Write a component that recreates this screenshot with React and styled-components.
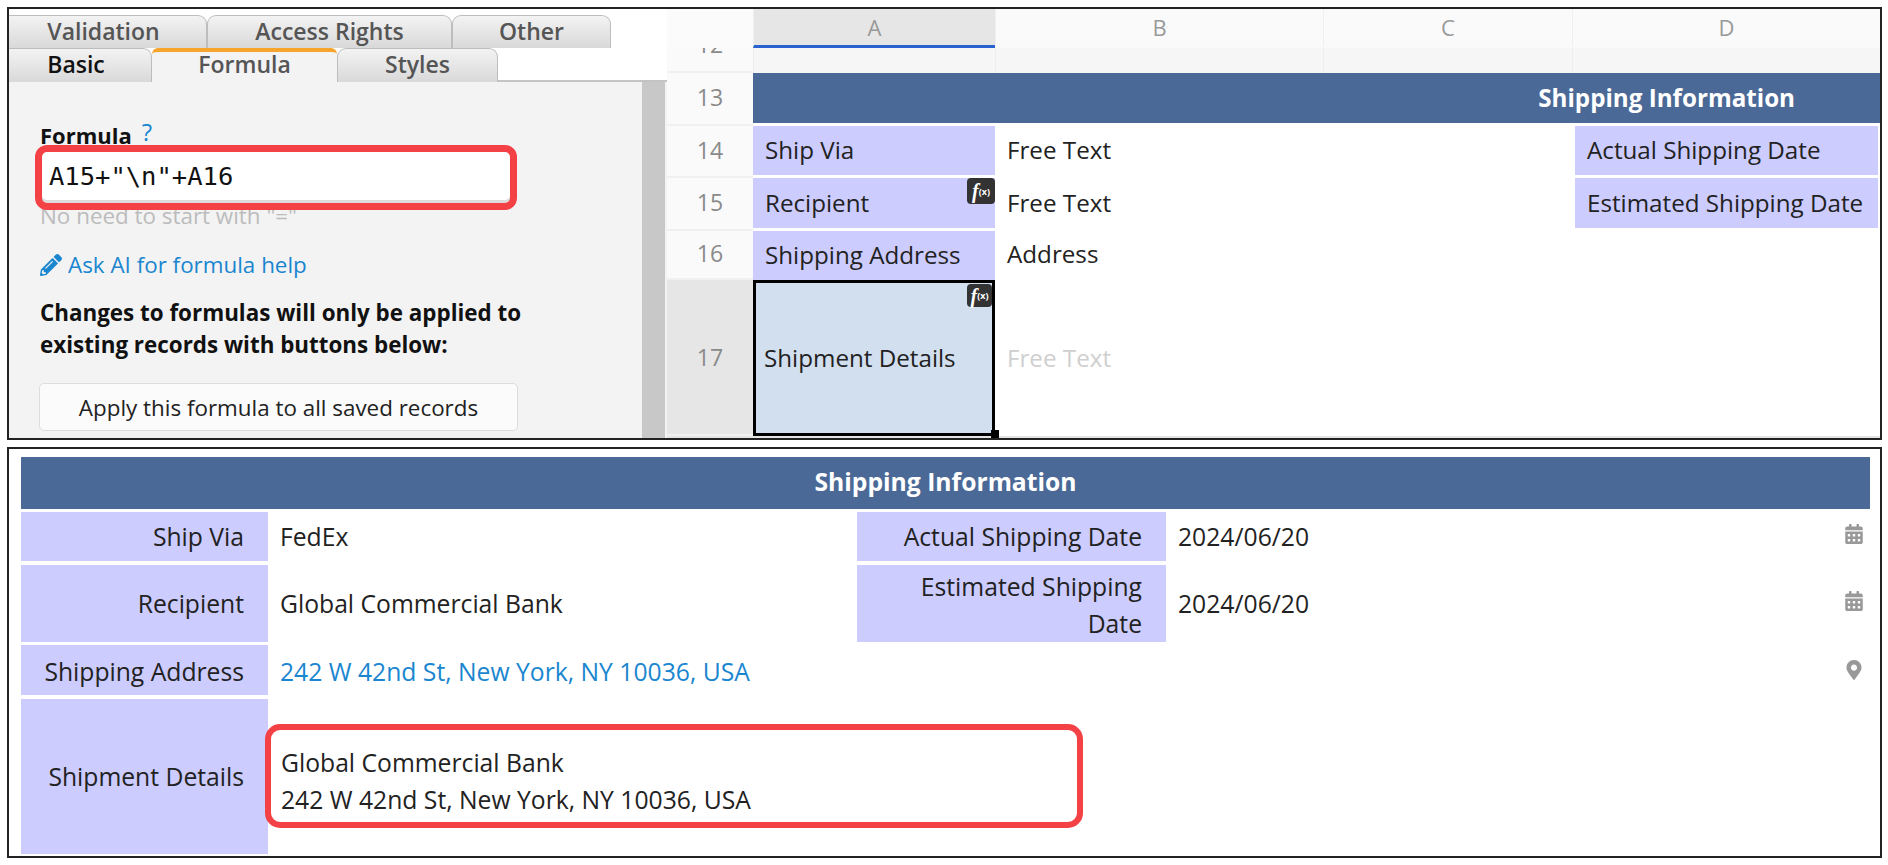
import styled, { createGlobalStyle } from "styled-components";
import { FaCalendarAlt, FaMapMarkerAlt, FaPencilAlt } from "react-icons/fa";

const GlobalStyle = createGlobalStyle`
  html, body {
    margin: 0;
    padding: 0;
    background: #fff;
    font-family: "Open Sans", "Noto Sans", sans-serif;
    color: #222;
  }
`;

const Page = styled.div`
  width: 1888px;
  height: 865px;
  padding: 7px 6px 0 7px;
  box-sizing: border-box;
  display: flex;
  flex-direction: column;
  gap: 7px;
  overflow: hidden;
`;

const EditorFrame = styled.section`
  height: 433px;
  box-sizing: border-box;
  border: 2px solid #222;
  display: flex;
  overflow: hidden;
`;

/* left side: field settings */
const SidePanel = styled.div`
  width: 658px;
  flex: none;
  padding-top: 6px;
  box-sizing: border-box;
  display: flex;
  flex-direction: column;
  overflow: hidden;
`;

const TabRow = styled.div`
  display: flex;
  margin-left: -9px;
  height: ${(p) => p.$height}px;
  flex: none;
`;

const Tab = styled.div`
  width: ${(p) => p.$width}px;
  box-sizing: border-box;
  padding-bottom: 3px;
  display: flex;
  align-items: center;
  justify-content: center;
  font-size: 23px;
  font-weight: 600;
  color: ${(p) => (p.$strong ? "#111" : "#555")};
  background: linear-gradient(#f3f3f3, #d9d9d9);
  border: 1px solid #bdbdbd;
  border-bottom: none;
  border-radius: 9px 9px 0 0;
`;

const ActiveTab = styled(Tab)`
  padding-bottom: 6px;
  background: #f3f3f3;
  border: none;
  border-top: 4px solid #f5a52c;
  border-radius: 6px 6px 0 0;
`;

const TabFiller = styled.div`
  flex: 1;
  border-bottom: 2px solid #c4c4c4;
`;

const PanelBody = styled.div`
  flex: 1;
  display: flex;
  background: #f3f3f3;
`;

const FormPane = styled.div`
  flex: 1;
  padding: 40px 0 0 31px;
`;

const Scrollbar = styled.div`
  width: 23px;
  flex: none;
  margin-right: 2px;
  background: #c8c8c8;
`;

const FormulaLabel = styled.div`
  font-size: 22px;
  font-weight: 700;
  line-height: 27px;
  color: #111;
  display: flex;
  gap: 10px;
`;

const HelpMark = styled.span`
  color: #1a86d0;
  font-weight: 400;
  font-size: 24px;
  margin-top: -4px;
`;

const FormulaBox = styled.div`
  position: relative;
  z-index: 1;
  width: 482px;
  height: 65px;
  margin: -4px 0 0 -5px;
  box-sizing: border-box;
  border: 7px solid #f44145;
  border-radius: 12px;
  background: #fff;
  display: flex;
  align-items: center;
  padding: 0 0 4px 7px;
  box-shadow: inset 0 -3px 0 #dcdcdc;
  font-family: "DejaVu Sans Mono", monospace;
  font-size: 25.5px;
  color: #111;
`;

const HintText = styled.div`
  font-size: 22.4px;
  line-height: 27px;
  margin-top: -8px;
  color: #bcbcbc;
`;

const AskLink = styled.div`
  margin-top: 22px;
  display: flex;
  align-items: center;
  gap: 6px;
  font-size: 22.4px;
  line-height: 27px;
  color: #1a86d0;
`;

const WarningText = styled.p`
  margin: 19px 0 0;
  font-size: 22.4px;
  font-weight: 700;
  line-height: 32px;
  color: #111;
  white-space: nowrap;
`;

const ApplyButton = styled.div`
  margin: 22px 0 0 -1px;
  width: 479px;
  height: 48px;
  box-sizing: border-box;
  border: 1px solid #ddd;
  border-radius: 5px;
  background: #fbfbfb;
  display: flex;
  align-items: center;
  justify-content: center;
  font-size: 22.4px;
  color: #222;
`;

/* right side: the spreadsheet */
const Sheet = styled.div`
  flex: 1;
  display: grid;
  grid-template-columns: 86px 242px 328px 249px 308px;
  grid-template-rows: 39px 25px 53px 52px 53px 49px 156px 1fr;
  font-size: 24.2px;
  color: #222;
`;

const Corner = styled.div`
  background: #fbfbfb;
`;

const ColHead = styled.div`
  display: flex;
  align-items: center;
  justify-content: center;
  font-size: 22px;
  color: #999;
  background: ${(p) => (p.$active ? "#e6e6e6" : "#fafafa")};
  border-bottom: 3px solid ${(p) => (p.$active ? "#2a62d0" : "#fafafa")};
  border-left: 1px solid #f0f0f0;
`;

const RowNum = styled.div`
  display: flex;
  align-items: center;
  justify-content: center;
  padding-bottom: ${(p) => (p.$selected ? 0 : 3)}px;
  box-sizing: border-box;
  font-size: 23px;
  color: #8a8a8a;
  background: ${(p) => (p.$selected ? "#e6e6e6" : "#fafafa")};
  border-bottom: 2px solid #f0f0f0;
  overflow: hidden;
`;

const StubNum = styled(RowNum)`
  align-items: flex-start;

  span {
    margin-top: -20px;
  }
`;

const StubCell = styled.div`
  background: #f6f6f6;
  border-left: 1px solid #eeeeee;
`;

const Banner = styled.div`
  grid-column: 2 / 6;
  margin-bottom: 3px;
  padding: 0 85px 2px 0;
  display: flex;
  align-items: center;
  justify-content: flex-end;
  background: #4b6996;
  color: #fff;
  font-weight: 700;
`;

const SheetLabel = styled.div`
  position: relative;
  margin: 0 ${(p) => (p.$inset ? 2 : 0)}px ${(p) => p.$gap ?? 3}px ${(p) => (p.$inset ? 3 : 0)}px;
  padding: 0 0 2px 12px;
  white-space: nowrap;
  display: flex;
  align-items: center;
  background: #ccccff;
`;

const SheetValue = styled.div`
  grid-column: span ${(p) => p.$span ?? 2};
  padding: 0 0 ${(p) => (p.$placeholder ? 1 : 5)}px 12px;
  display: flex;
  align-items: center;
  color: ${(p) => (p.$placeholder ? "#cfcfcf" : "#222")};
`;

const SelectedCell = styled.div`
  position: relative;
  box-sizing: border-box;
  border: 3px solid #000;
  padding: 0 0 2px 8px;
  display: flex;
  align-items: center;
  background: #d2dfef;
`;

const DragHandle = styled.span`
  position: absolute;
  right: -7px;
  bottom: -5px;
  width: 8px;
  height: 8px;
  background: #000;
`;

const FxBadge = styled.span`
  position: absolute;
  top: ${(p) => p.$top}px;
  right: ${(p) => p.$right}px;
  width: ${(p) => p.$size}px;
  height: ${(p) => p.$size - 2}px;
  border-radius: 4px;
  background: #333;
  color: #fff;
  display: flex;
  align-items: center;
  justify-content: center;
  font-family: "Liberation Serif", serif;
  font-size: 20px;
  line-height: 1;

  i {
    font-weight: 700;
  }

  small {
    font-family: "Open Sans", sans-serif;
    font-size: 9px;
    font-weight: 700;
  }
`;

const SheetFooter = styled.div`
  grid-column: 1 / 6;
  background: #e4e4e4;
`;

/* bottom: the saved record */
const RecordFrame = styled.section`
  height: 411px;
  box-sizing: border-box;
  border: 2px solid #222;
  padding: 8px 10px 0 12px;
`;

const RecordGrid = styled.div`
  display: grid;
  grid-template-columns: 247px 589px 309px 704px;
  grid-template-rows: 55px 53px 80px 54px 155px;
  font-size: 24.7px;
  color: #222;
`;

const RecordTitle = styled.div`
  grid-column: 1 / 5;
  margin-bottom: 3px;
  padding-bottom: 3px;
  display: flex;
  align-items: center;
  justify-content: center;
  background: #4b6996;
  color: #fff;
  font-weight: 700;
`;

const RecordLabel = styled.div`
  margin-bottom: ${(p) => p.$gap ?? 4}px;
  padding: ${(p) => p.$shift ?? 0}px 24px 1px 12px;
  display: flex;
  align-items: center;
  justify-content: flex-end;
  text-align: right;
  line-height: 37px;
  background: #ccccff;
`;

const RecordValue = styled.div`
  grid-column: span ${(p) => p.$span ?? 1};
  margin-bottom: ${(p) => p.$gap ?? 4}px;
  padding: ${(p) => p.$shift ?? 0}px 6px 1px 12px;
  display: flex;
  align-items: center;
  justify-content: space-between;
  color: ${(p) => (p.$link ? "#1a86d0" : "#222")};
`;

const FieldIcon = styled.span`
  display: flex;
  margin-top: -4px;
  color: #999;
  font-size: 20px;
`;

const DetailBox = styled.div`
  width: 818px;
  height: 104px;
  margin-left: -15px;
  padding: 9px 0 0 10px;
  box-sizing: border-box;
  border: 6px solid #f44145;
  border-radius: 15px;
  display: flex;
  flex-direction: column;
  justify-content: center;
  line-height: 37px;
`;

function Fx(props) {
  return (
    <FxBadge {...props}>
      <i>f</i>
      <small>(x)</small>
    </FxBadge>
  );
}

function App() {
  return (
    <Page>
      <GlobalStyle />
      <EditorFrame>
        <SidePanel>
          <TabRow $height={33}>
            <Tab $width={207}>Validation</Tab>
            <Tab $width={245}>Access Rights</Tab>
            <Tab $width={159}>Other</Tab>
          </TabRow>
          <TabRow $height={34}>
            <Tab $width={152} $strong>
              Basic
            </Tab>
            <ActiveTab $width={185}>Formula</ActiveTab>
            <Tab $width={161}>Styles</Tab>
            <TabFiller />
          </TabRow>
          <PanelBody>
            <FormPane>
              <FormulaLabel>
                Formula <HelpMark>?</HelpMark>
              </FormulaLabel>
              <FormulaBox>A15+"\n"+A16</FormulaBox>
              <HintText>No need to start with "="</HintText>
              <AskLink>
                <FaPencilAlt size={22} />
                Ask AI for formula help
              </AskLink>
              <WarningText>
                Changes to formulas will only be applied to
                <br />
                existing records with buttons below:
              </WarningText>
              <ApplyButton>Apply this formula to all saved records</ApplyButton>
            </FormPane>
            <Scrollbar />
          </PanelBody>
        </SidePanel>

        <Sheet>
          <Corner />
          <ColHead $active>A</ColHead>
          <ColHead>B</ColHead>
          <ColHead>C</ColHead>
          <ColHead>D</ColHead>

          <StubNum>
            <span>12</span>
          </StubNum>
          <StubCell />
          <StubCell />
          <StubCell />
          <StubCell />

          <RowNum>13</RowNum>
          <Banner>Shipping Information</Banner>

          <RowNum>14</RowNum>
          <SheetLabel>Ship Via</SheetLabel>
          <SheetValue>Free Text</SheetValue>
          <SheetLabel $inset>Actual Shipping Date</SheetLabel>

          <RowNum>15</RowNum>
          <SheetLabel>
            Recipient
            <Fx $top={0} $right={0} $size={28} />
          </SheetLabel>
          <SheetValue>Free Text</SheetValue>
          <SheetLabel $inset>Estimated Shipping Date</SheetLabel>

          <RowNum>16</RowNum>
          <SheetLabel $gap={0}>Shipping Address</SheetLabel>
          <SheetValue $span={3}>Address</SheetValue>

          <RowNum $selected>17</RowNum>
          <SelectedCell>
            Shipment Details
            <Fx $top={1} $right={0} $size={25} />
            <DragHandle />
          </SelectedCell>
          <SheetValue $span={3} $placeholder>
            Free Text
          </SheetValue>

          <SheetFooter />
        </Sheet>
      </EditorFrame>

      <RecordFrame>
        <RecordGrid>
          <RecordTitle>Shipping Information</RecordTitle>

          <RecordLabel>Ship Via</RecordLabel>
          <RecordValue $span={1}>FedEx</RecordValue>
          <RecordLabel>Actual Shipping Date</RecordLabel>
          <RecordValue>
            2024/06/20
            <FieldIcon>
              <FaCalendarAlt />
            </FieldIcon>
          </RecordValue>

          <RecordLabel $gap={3}>Recipient</RecordLabel>
          <RecordValue $gap={3}>Global Commercial Bank</RecordValue>
          <RecordLabel $gap={3} $shift={4}>
            Estimated Shipping Date
          </RecordLabel>
          <RecordValue $gap={3}>
            2024/06/20
            <FieldIcon>
              <FaCalendarAlt />
            </FieldIcon>
          </RecordValue>

          <RecordLabel $shift={4}>Shipping Address</RecordLabel>
          <RecordValue $span={3} $link $shift={4}>
            242 W 42nd St, New York, NY 10036, USA
            <FieldIcon>
              <FaMapMarkerAlt />
            </FieldIcon>
          </RecordValue>

          <RecordLabel $gap={0}>Shipment Details</RecordLabel>
          <RecordValue $span={3} $gap={0}>
            <DetailBox>
              <div>Global Commercial Bank</div>
              <div>242 W 42nd St, New York, NY 10036, USA</div>
            </DetailBox>
          </RecordValue>
        </RecordGrid>
      </RecordFrame>
    </Page>
  );
}

export default App;
